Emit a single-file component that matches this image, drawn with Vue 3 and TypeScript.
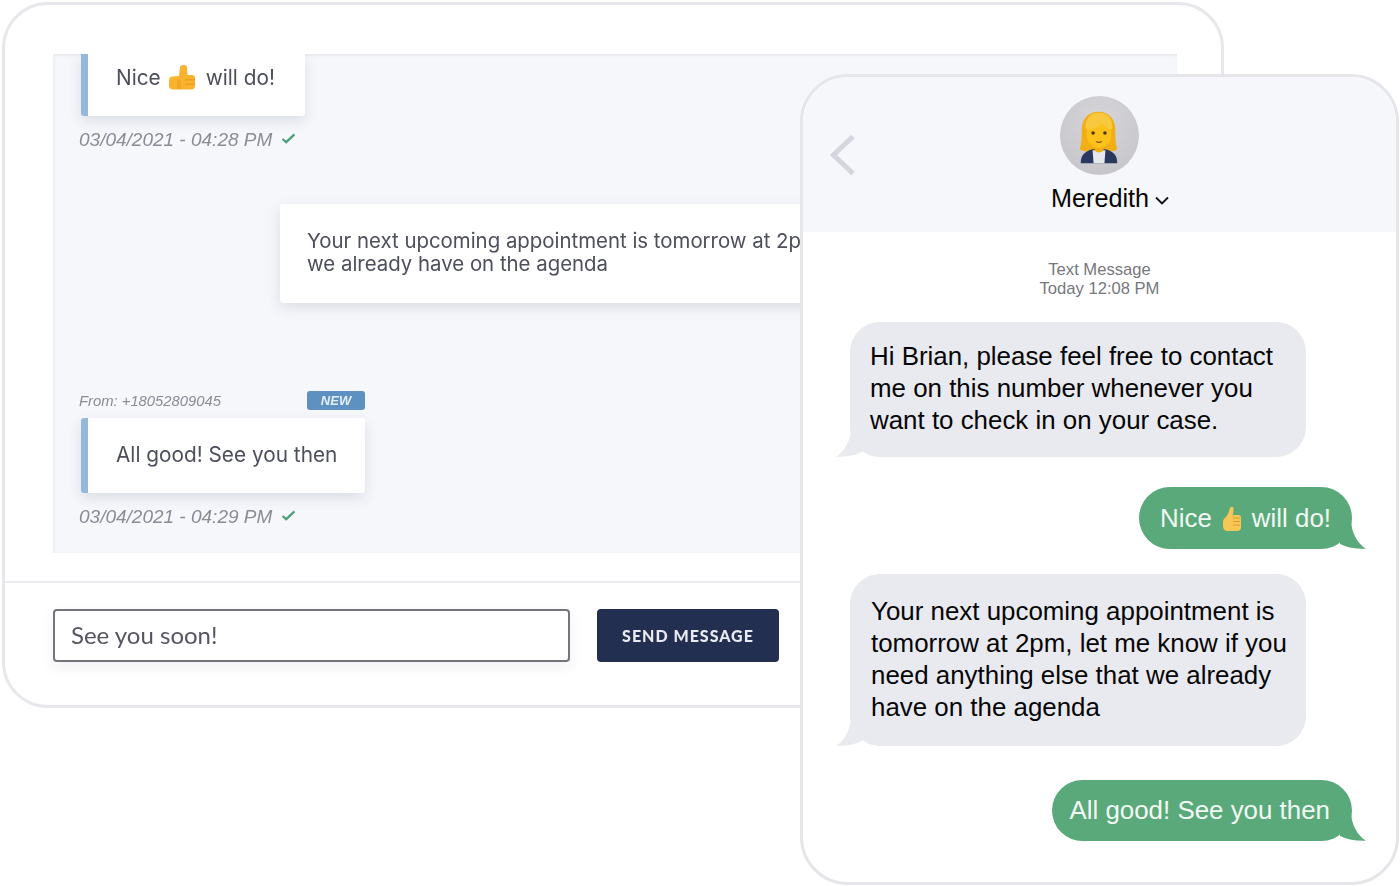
<template>
  <div class="scene">
    <section class="dashboard">
      <div class="thread">
        <div class="card card-first">
          <span class="card-text">Nice
            <svg class="thumb-orange" viewBox="0 0 26 26">
              <path d="M10 12 11 3c.2-2.500 6.500-3 7 0l.5 8H23c1.800 0 3 1.200 3 3v8c0 2-1.500 3.500-3.500 3.500H4c-2.200 0-4-1.500-4-3.500v-6c0-2 1.500-3.500 3.500-3.500Z" fill="#f8b32f" />
              <path d="M16 15h10v1.500H16Zm0 4.500h10V21H16Z" fill="#e9921a" opacity=".7" />
              <path d="M8 25V17c2-1 3-1 4 0v8Z" fill="#f29f22" opacity=".6" />
            </svg>
            will do!</span>
        </div>
        <div class="stamp stamp-first">
          <span>03/04/2021 - 04:28 PM</span>
          <svg class="tick" viewBox="0 0 16 12"><path d="M1.500 6.500 5.500 10 14.500 1.500" /></svg>
        </div>

        <div class="card card-out">
          <p>Your next upcoming appointment is tomorrow at 2pm, let me know if you need anything else that<br />we already have on the agenda</p>
        </div>

        <div class="from-row">
          <span class="from">From: +18052809045</span>
          <span class="badge">NEW</span>
        </div>
        <div class="card card-last">
          <span class="card-text">All good! See you then</span>
        </div>
        <div class="stamp stamp-last">
          <span>03/04/2021 - 04:29 PM</span>
          <svg class="tick" viewBox="0 0 16 12"><path d="M1.500 6.500 5.500 10 14.500 1.500" /></svg>
        </div>
      </div>

      <div class="composer">
        <div class="input">See you soon!</div>
        <button class="send">SEND MESSAGE</button>
      </div>
    </section>

    <section class="phone">
      <header class="phone-head">
        <svg class="back" viewBox="0 0 26 42"><path d="M23 2.500 3.500 21 23 39.500" /></svg>
        <div class="avatar">
          <svg viewBox="0 0 80 80" width="79" height="79">
            <!-- hair behind the head -->
            <path d="M39 16c-11 0-17 8-17 18 0 8 0 14-2 20 3 2 8 3 12 2h14c4 1 9 0 12-2-2-6-2-12-2-20 0-10-6-18-17-18Z" fill="#f0ae17" />
            <!-- jacket and shirt -->
            <path d="M21 68c0-8 4-12 12-14h13c8 2 12 6 12 14Z" fill="#2a3860" />
            <path d="M33 55h13l-1 13H34Z" fill="#e6e8ee" />
            <path d="M35 47h9v8c-2 3-7 3-9 0Z" fill="#f0ae17" />
            <!-- face -->
            <ellipse cx="39.500" cy="39" rx="12.500" ry="13.500" fill="#fcc21b" />
            <path d="M26 34c7 0 13-3 16-7 2 3 6 6 11 7 1-10-4-17-14-17-9 0-14 7-13 17Z" fill="#f8c93f" />
            <circle cx="33.500" cy="37.500" r="1.800" fill="#4a3510" />
            <circle cx="45.500" cy="37.500" r="1.800" fill="#4a3510" />
            <path d="M36 45.500c2 1 5 1 7 0-1 2.500-6 2.500-7 0Z" fill="#6b3d12" />
          </svg>
        </div>
        <div class="contact">
          <span>Meredith</span>
          <svg viewBox="0 0 14 9"><path d="M1 1.500 7 7.500 13 1.500" /></svg>
        </div>
      </header>

      <div class="phone-body">
        <div class="meta">Text Message<br />Today 12:08 PM</div>

        <div class="bubble in first">
          Hi Brian, please feel free to contact<br />me on this number whenever you<br />want to check in on your case.
          <svg class="tail" viewBox="0 0 26 30"><path d="M15 0C15 14 8 25 0 29.700 9 30 18 29 26 25V0Z" /></svg>
        </div>

        <div class="bubble out second">
          Nice
          <svg class="thumb-yellow" viewBox="0 0 18 26">
            <path d="M2 13c2-2 4-5 4.500-9C6.700 1.500 10 .5 10.500 3.500c.3 2-.3 4.500-.8 6.500h5.800c1.500 0 2.500 1 2.500 2.500v10c0 2-1.500 3.500-3.500 3.500H5c-3 0-5-2-5-5v-4c0-1.500.8-3 2-4Z" fill="#f8c655" />
            <path d="M10 13h7M10 16.500h7M10 20h7" stroke="#e09a2b" stroke-width="1.200" fill="none" />
          </svg>
          will do!
          <svg class="tail" viewBox="0 0 26 30"><path d="M15 0C15 14 8 25 0 29.700 9 30 18 29 26 25V0Z" /></svg>
        </div>

        <div class="bubble in third">
          Your next upcoming appointment is<br />tomorrow at 2pm, let me know if you<br />need anything else that we already<br />have on the agenda
          <svg class="tail" viewBox="0 0 26 30"><path d="M15 0C15 14 8 25 0 29.700 9 30 18 29 26 25V0Z" /></svg>
        </div>

        <div class="bubble out fourth">
          All good! See you then
          <svg class="tail" viewBox="0 0 26 30"><path d="M15 0C15 14 8 25 0 29.700 9 30 18 29 26 25V0Z" /></svg>
        </div>
      </div>
    </section>
  </div>
</template>

<script setup lang="ts">
// static mock of the two-sided conversation, nothing to wire up
</script>

<style>
html,
body {
  margin: 0;
  background: #fff;
}
</style>

<style scoped>
.scene {
  position: relative;
  width: 1400px;
  height: 886px;
  overflow: hidden;
  padding: 2px 0 0 2px;
  box-sizing: border-box;
}

.dashboard {
  width: 1222px;
  height: 706px;
  box-sizing: border-box;
  border: 3px solid #e8e8ec;
  border-radius: 46px;
  background: #fff;
  padding-top: 49px;
  display: flex;
  flex-direction: column;
}

.thread {
  width: 1124px;
  height: 499px;
  margin-left: 48px;
  padding-left: 28px;
  box-sizing: border-box;
  background: #f6f7fb;
  box-shadow: inset 0 2px 2px #e9eaee, inset 2px 0 2px #eeeff3;
  overflow: hidden;
  color: #4d4f5c;
  font-family: Inter, "Liberation Sans", sans-serif;
  filter: blur(0.4px);
}

.card {
  background: #fff;
  box-shadow: 0 5px 14px rgba(60, 70, 100, 0.14);
  border-radius: 3px;
  box-sizing: border-box;
  position: relative;
}

.card-text {
  font-size: 20.800px;
  display: flex;
  align-items: center;
  gap: 8px;
}

.card-first,
.card-last {
  border-left: 7px solid #93b8dc;
  padding-left: 28px;
}

.card-first {
  width: 224px;
  height: 62px;
  padding-top: 10px;
  border-radius: 0 0 3px 3px;
}

.thumb-orange {
  width: 26px;
  height: 26px;
  margin-right: 3px;
}

.stamp {
  display: flex;
  align-items: center;
  gap: 9px;
  margin-left: -2px;
  color: #8a8c96;
  font: italic 19px "Liberation Sans", sans-serif;
  height: 22px;
}

.stamp-first {
  margin-top: 13px;
}

.stamp-last {
  margin-top: 13px;
}

.tick {
  width: 15px;
  height: 11px;
  margin-top: -4px;
}

.tick path {
  fill: none;
  stroke: #4d9d78;
  stroke-width: 2.400;
}

.card-out {
  width: 880px;
  height: 99px;
  margin: 53px 0 0 199px;
  padding: 25px 0 0 27px;
}

.card-out p {
  margin: 0;
  font-size: 20.400px;
  line-height: 23px;
  white-space: nowrap;
}

.from-row {
  width: 286px;
  height: 19px;
  margin: 88px 0 8px -2px;
  display: flex;
  justify-content: space-between;
  align-items: center;
}

.from {
  font: italic 14.800px "Liberation Sans", sans-serif;
  color: #8a8c96;
}

.badge {
  width: 58px;
  height: 19px;
  text-align: center;
  border-radius: 3px;
  background: #5d91c2;
  color: #e4eef8;
  font: italic bold 13px/19px "Liberation Sans", sans-serif;
}

.card-last {
  width: 284px;
  height: 75px;
  padding-top: 24px;
}

.composer {
  margin-top: 28px;
  border-top: 2px solid #ececf0;
  padding: 26px 0 0 48px;
  display: flex;
  gap: 27px;
  filter: blur(0.4px);
}

.input {
  width: 517px;
  height: 53px;
  box-sizing: border-box;
  border: 2px solid #73747c;
  border-radius: 4px;
  padding-left: 16px;
  font: 24px/48px Lato, "Liberation Sans", sans-serif;
  color: #55565f;
  box-shadow: 0 5px 14px rgba(60, 70, 100, 0.08);
}

.send {
  width: 182px;
  height: 53px;
  border: none;
  border-radius: 4px;
  background: #232f50;
  color: #e8eaf0;
  font: 900 16px Lato, "Liberation Sans", sans-serif;
  letter-spacing: 1px;
}

/* phone sits over the dashboard */
.phone {
  position: absolute;
  left: 800px;
  top: 74px;
  width: 599px;
  height: 811px;
  box-sizing: border-box;
  border: 3px solid #e5e5ea;
  border-radius: 48px;
  background: #fff;
  overflow: hidden;
  font-family: "Liberation Sans", Arial, sans-serif;
}

.phone-head {
  position: relative;
  height: 155px;
  background: #f6f7fb;
  display: flex;
  flex-direction: column;
  align-items: center;
  padding-top: 19px;
  box-sizing: border-box;
}

.back {
  position: absolute;
  left: 27px;
  top: 57px;
  width: 26px;
  height: 42px;
}

.back path {
  fill: none;
  stroke: #d3d6dc;
  stroke-width: 5;
}

.avatar {
  width: 79px;
  height: 79px;
  border-radius: 50%;
  background: radial-gradient(circle at 50% 30%, #d6d6da, #c2c2c7);
  overflow: hidden;
}

.contact {
  margin-top: 8px;
  margin-left: 21px;
  display: flex;
  align-items: center;
  gap: 6px;
  font-size: 25.200px;
  line-height: 30px;
  color: #050505;
}

.contact svg {
  width: 14px;
  height: 9px;
  margin-top: 5px;
}

.contact path {
  fill: none;
  stroke: #111;
  stroke-width: 1.800;
}

.phone-body {
  display: flex;
  flex-direction: column;
}

.meta {
  margin-top: 28px;
  text-align: center;
  font-size: 16.600px;
  line-height: 19px;
  color: #77777d;
}

.bubble {
  position: relative;
  box-sizing: border-box;
  font-size: 25.900px;
  line-height: 32px;
  white-space: nowrap;
}

.bubble .tail {
  position: absolute;
  bottom: 0;
  width: 26px;
  height: 30px;
}

.in {
  align-self: flex-start;
  width: 456px;
  margin-left: 47px;
  padding-left: 20px;
  background: #e9eaf0;
  color: #060606;
  border-radius: 30px;
}

.in .tail {
  left: -14px;
  fill: #e9eaf0;
}

.out {
  align-self: flex-end;
  margin-right: 44px;
  height: 62px;
  padding: 15px 21px 0;
  background: #5aa97a;
  color: #f2f8f4;
  border-radius: 31px;
  display: flex;
  gap: 11px;
}

.out .tail {
  right: -14px;
  fill: #5aa97a;
  transform: scaleX(-1);
}

.first {
  margin-top: 24px;
  height: 135px;
  padding-top: 18px;
}

.second {
  margin-top: 30px;
}

.third {
  margin-top: 25px;
  height: 172px;
  padding-top: 21px;
  padding-left: 21px;
}

.fourth {
  margin-top: 34px;
  height: 61px;
  padding-top: 14px;
  padding-left: 17px;
  padding-right: 22px;
}

.thumb-yellow {
  width: 18px;
  height: 26px;
  margin-top: 3px;
}
</style>
